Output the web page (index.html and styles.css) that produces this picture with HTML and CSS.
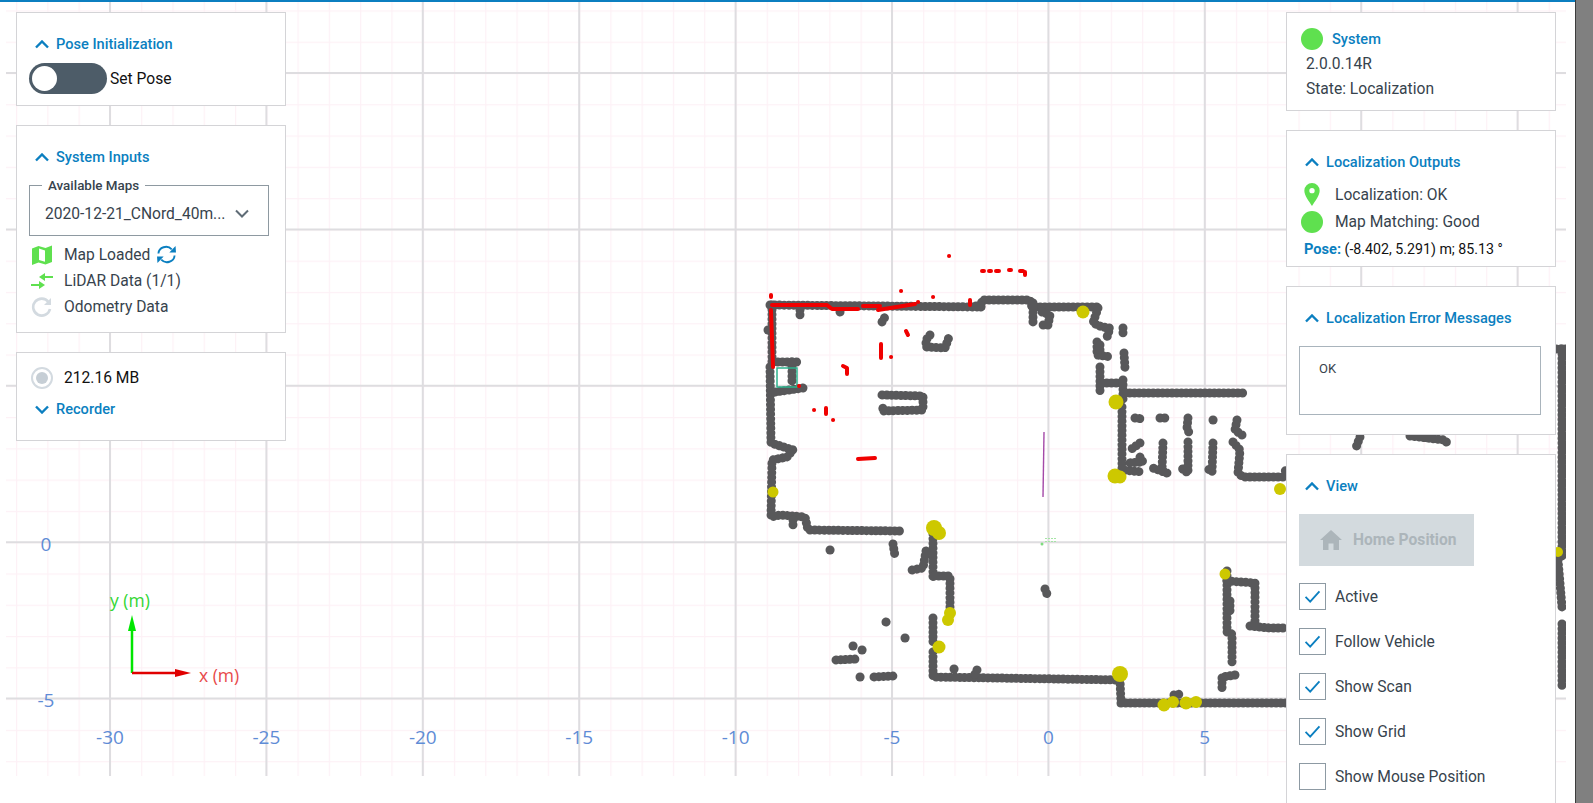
FILE: index.html
```html
<!DOCTYPE html>
<html lang="en">
	<head>
		<meta charset="UTF-8">
		<title>Localization</title>
		<link rel="stylesheet" href="styles.css">
	</head>
	<body>
		<div class="main_box">
			<!-- map canvas, page coordinates -->
			<svg class="map_canvas" viewBox="0 2 1575 801" width="1575" height="801">
				<defs>
					<pattern id="minor_grid" patternUnits="userSpaceOnUse" x="16" y="10.4" width="31.28" height="31.28">
						<path class="grid_minor" d="M0.5 0V31.28M0 0.5H31.28"/>
					</pattern>
					<clipPath id="canvas_clip"><rect x="6" y="2" width="1560" height="774"/></clipPath>
				</defs>
				<g clip-path="url(#canvas_clip)">
					<rect x="6" y="2" width="1560" height="774" fill="url(#minor_grid)"/>
					<path class="grid_major" d="M110 2V776M266.4 2V776M422.8 2V776M579.2 2V776M735.6 2V776M892 2V776M1048.4 2V776M1204.8 2V776M1361.2 2V776M1517.6 2V776"/>
					<path class="grid_major" d="M6 73H1566M6 229.4H1566M6 385.8H1566M6 542.2H1566M6 698.6H1566"/>

					<!-- scanned walls -->
					<g class="wall">
						<polyline points="770,305 980,307"/>
						<polyline points="981,307 982,300 1030,300 1032,307 1080,307 1098,307"/>
						<polyline points="976,306 984,306"/>
						<polyline points="1033,303 1033,325"/>
						<polyline points="1042,312 1050,315 1048,325 1042,325"/>
						<polyline points="1098,308 1093,323 1102,327 1110,328 1107,337"/>
						<polyline points="1123,328 1123,337"/>
						<polyline points="1097,342 1097,355 1112,357"/>
						<polyline points="1100,345 1100,352"/>
						<polyline points="1124,353 1125,368"/>
						<polyline points="1100,367 1100,392"/>
						<polyline points="1102,383 1123,383"/>
						<polyline points="1123,380 1123,400"/>
						<polyline points="1125,393 1243,393"/>
						<polyline points="1122,407 1122,470 1143,472"/>
						<polyline points="1135,418 1143,419"/>
						<polyline points="1160,418 1168,418"/>
						<polyline points="1188,418 1187,428 1190,435"/>
						<polyline points="1213,420 1213.5,420"/>
						<polyline points="1237,420 1235,430 1242,435"/>
						<polyline points="1140,443 1130,450"/>
						<polyline points="1163,443 1162,470 1167,473 1150,467"/>
						<polyline points="1188,442 1188,473 1180,467"/>
						<polyline points="1213,443 1212,472 1207,468"/>
						<polyline points="1233,442 1240,450 1238,473 1243,477 1286,477 1285,467"/>
						<polyline points="1140,457 1143,462 1128,463"/>
						<polyline points="772,305 772,365"/>
						<polyline points="768,330 768.5,330"/>
						<polyline points="770,367 771,443 793,450 787,457 772,460 771,517 780,515 805,517 808,530 900,531"/>
						<polyline points="793,520 793,525"/>
						<polyline points="773,362 798,362"/>
						<polyline points="792,362 792,383"/>
						<polyline points="775,392 803,388"/>
						<polyline points="882,322 885,317"/>
						<polyline points="800,310 800,318"/>
						<polyline points="840,312 842,316"/>
						<polyline points="930,335 926,340 926,347 945,348 949,337"/>
						<polyline points="882,395 923,396 923,410 882,411 884,405"/>
						<polyline points="933,534 933,579"/>
						<polyline points="934,576 950,576 950,608"/>
						<polyline points="926,551 923,568 912,570"/>
						<polyline points="893,544 895,556"/>
						<polyline points="830,550 830.5,550"/>
						<polyline points="1045,589 1047,594"/>
						<polyline points="933,618 933,645"/>
						<polyline points="933,652 933,677 1120,680 1121,703 1286,703"/>
						<polyline points="954,669 954.5,669"/>
						<polyline points="977,670 974,676"/>
						<polyline points="886,622 889,624"/>
						<polyline points="905,638 905.5,638"/>
						<polyline points="853,646 853.5,646"/>
						<polyline points="862,650 862.5,650"/>
						<polyline points="836,660 857,659"/>
						<polyline points="860,677 860.5,677"/>
						<polyline points="874,677 894,676"/>
						<polyline points="1174,695 1181,694"/>
						<polyline points="1227,571 1227,632 1232,634 1232,662 1235,660"/>
						<polyline points="1230,601 1230,615"/>
						<polyline points="1227,581 1255,583 1255,625 1250,626 1270,628 1286,628"/>
						<polyline points="1235,675 1222,677 1222,689"/>
						<polyline points="1360,437 1355,450"/>
						<polyline points="1410,436 1445,440 1447,443"/>
						<polyline points="1556,349 1566,349"/>
						<polyline points="1562,349 1562,560"/>
						<polyline points="1558,560 1562,607"/>
						<polyline points="1562,624 1562,688"/>
					</g>

					<rect class="teal_box" x="777" y="368" width="20" height="19"/>

					<!-- matched points -->
					<g class="yellow_dots">
						<circle cx="1083" cy="312" r="6.5"/>
						<circle cx="1116" cy="402" r="7.5"/>
						<circle cx="1115" cy="476" r="7.5"/>
						<circle cx="1120" cy="477" r="6.5"/>
						<circle cx="773" cy="492" r="5.5"/>
						<circle cx="934" cy="528" r="8"/>
						<circle cx="939" cy="533" r="7"/>
						<circle cx="950" cy="613" r="6"/>
						<circle cx="948" cy="620" r="6"/>
						<circle cx="939" cy="647" r="6.5"/>
						<circle cx="1120" cy="674" r="8"/>
						<circle cx="1164" cy="705" r="6.5"/>
						<circle cx="1173" cy="702" r="6"/>
						<circle cx="1186" cy="703" r="6.5"/>
						<circle cx="1196" cy="702" r="6"/>
						<circle cx="1225" cy="574" r="5.5"/>
						<circle cx="1280" cy="489" r="6"/>
						<circle cx="1558" cy="552" r="5"/>
					</g>

					<!-- laser scan -->
					<g class="red_scan">
						<polyline points="771,295 771,297"/>
						<polyline points="772,305 827,305 832,309 858,309"/>
						<polyline points="863,306 880,306"/>
						<polyline points="878,310 915,304"/>
						<polyline points="771,310 773,367"/>
						<polyline points="881,344 881,358"/>
						<polyline points="858,459 875,458"/>
						<polyline points="843,366 847,368 847,374"/>
						<polyline points="906,331 908,335"/>
						<polyline points="970,300 970,305"/>
						<polyline points="826,408 826,414"/>
						<path d="M949 256h.1M982 271h2M989 271h2M996 271h3M1009 270h2M1020 271h3M1025 272v3M901 291h.1M933 297h.1M918 302h.1M891 357h.1M799 386h.1M814 410h.1M833 420h.1"/>
					</g>

					<line class="purple_line" x1="1044" y1="432" x2="1043" y2="497"/>
					<circle class="vehicle_dot" cx="1042" cy="544" r="1.5"/>
					<path class="vehicle_mark" d="M1045 538.5h11M1045 541.5h11"/>

					<text class="axis_num" x="110" y="744">-30</text>
					<text class="axis_num" x="266.4" y="744">-25</text>
					<text class="axis_num" x="422.8" y="744">-20</text>
					<text class="axis_num" x="579.2" y="744">-15</text>
					<text class="axis_num" x="735.6" y="744">-10</text>
					<text class="axis_num" x="892" y="744">-5</text>
					<text class="axis_num" x="1048.4" y="744">0</text>
					<text class="axis_num" x="1204.8" y="744">5</text>
					<text class="axis_num" x="46" y="551">0</text>
					<text class="axis_num" x="46" y="707">-5</text>

					<!-- axis legend -->
					<line class="axis_y" x1="132" y1="673" x2="132" y2="625"/>
					<polygon class="axis_y_head" points="132,615 128,631 136,631"/>
					<line class="axis_x" x1="132" y1="673" x2="178" y2="673"/>
					<polygon class="axis_x_head" points="191,673 175,669 175,677"/>
					<text class="axis_y_text" x="110" y="607">y (m)</text>
					<text class="axis_x_text" x="199" y="682">x (m)</text>
				</g>
			</svg>

			<div class="side_col side_left">
				<div class="panel pose_panel">
					<div class="panel_title">
						<svg class="chevron" viewBox="0 0 14 9"><polyline points="1,7.5 7,1.5 13,7.5"/></svg>
						<span>Pose Initialization</span>
					</div>
					<div class="pose_row">
						<span class="toggle"><span class="toggle_knob"></span></span>
						<span class="black_text">Set Pose</span>
					</div>
				</div>

				<div class="panel inputs_panel">
					<div class="panel_title">
						<svg class="chevron" viewBox="0 0 14 9"><polyline points="1,7.5 7,1.5 13,7.5"/></svg>
						<span>System Inputs</span>
					</div>
					<fieldset class="map_select">
						<legend>Available Maps</legend>
						<span class="map_name">2020-12-21_CNord_40m...</span>
						<svg class="select_arrow" viewBox="0 0 14 9"><polyline points="1,1.5 7,7.5 13,1.5"/></svg>
					</fieldset>
					<div class="status_row">
						<svg class="status_icon" viewBox="0 0 22 20">
							<path class="green_fill" d="M1 3.5L7.5 1L14.5 3L21 .5V17L14.5 19.5L7.5 17.5L1 20Z"/>
							<path class="white_fill" d="M8 3.6L14 5.4V16.8L8 15Z"/>
						</svg>
						<span>Map Loaded</span>
						<svg class="sync_icon" viewBox="0 0 22 20">
							<path d="M2.5 9A8 7.5 0 0 1 16.5 4.5"/>
							<polygon points="14,8 21,8 20.5,1"/>
							<path d="M19.5 11A8 7.5 0 0 1 5.5 15.5"/>
							<polygon points="8,12 1,12 1.5,19"/>
						</svg>
					</div>
					<div class="status_row">
						<svg class="status_icon" viewBox="0 0 22 20">
							<path class="green_line" d="M0 14H9M22 6H14"/>
							<polygon class="green_fill" points="8,10 8,18 14,14"/>
							<polygon class="green_fill" points="14,2 14,10 8,6"/>
						</svg>
						<span>LiDAR Data (1/1)</span>
					</div>
					<div class="status_row">
						<svg class="status_icon" viewBox="0 0 22 20">
							<path class="gray_line" d="M17.5 5A8.5 8.5 0 1 0 19 12"/>
							<polygon class="gray_fill" points="13,8 20,8 20,1"/>
						</svg>
						<span>Odometry Data</span>
					</div>
				</div>

				<div class="panel recorder_panel">
					<div class="recorder_row">
						<span class="record_icon"><span class="record_inner"></span></span>
						<span class="black_text">212.16 MB</span>
					</div>
					<div class="panel_title">
						<svg class="chevron" viewBox="0 0 14 9"><polyline points="1,1.5 7,7.5 13,1.5"/></svg>
						<span>Recorder</span>
					</div>
				</div>
			</div>

			<div class="side_col side_right">
				<div class="panel system_panel">
					<div class="system_title">
						<span class="green_dot"></span>
						<span class="title_text">System</span>
					</div>
					<div class="system_line">2.0.0.14R</div>
					<div class="system_line">State: Localization</div>
				</div>

				<div class="panel outputs_panel">
					<div class="panel_title">
						<svg class="chevron" viewBox="0 0 14 9"><polyline points="1,7.5 7,1.5 13,7.5"/></svg>
						<span>Localization Outputs</span>
					</div>
					<div class="output_row">
						<span class="output_icon">
							<svg class="pin_icon" viewBox="0 0 16 24">
								<path class="green_fill" fill-rule="evenodd" d="M8 0A8 8 0 0 0 0 8C0 13 5 19 8 24C11 19 16 13 16 8A8 8 0 0 0 8 0ZM8 5.2A2.8 2.8 0 1 1 8 10.8A2.8 2.8 0 1 1 8 5.2Z"/>
							</svg>
						</span>
						<span>Localization: OK</span>
					</div>
					<div class="output_row">
						<span class="output_icon"><span class="green_dot"></span></span>
						<span>Map Matching: Good</span>
					</div>
					<div class="pose_line"><b>Pose:</b> (-8.402, 5.291) m; 85.13 °</div>
				</div>

				<div class="panel errors_panel">
					<div class="panel_title">
						<svg class="chevron" viewBox="0 0 14 9"><polyline points="1,7.5 7,1.5 13,7.5"/></svg>
						<span>Localization Error Messages</span>
					</div>
					<div class="error_box">OK</div>
				</div>

				<div class="panel view_panel">
					<div class="panel_title">
						<svg class="chevron" viewBox="0 0 14 9"><polyline points="1,7.5 7,1.5 13,7.5"/></svg>
						<span>View</span>
					</div>
					<div class="home_btn">
						<svg class="home_icon" viewBox="0 0 22 20"><path d="M11 0L22 10H19V20H13.5V13.5H8.5V20H3V10H0Z"/></svg>
						<span>Home Position</span>
					</div>
					<ul class="check_list">
						<li><span class="check_box"><svg viewBox="0 0 27 27"><polyline points="6,14 11,19 21,8"/></svg></span>Active</li>
						<li><span class="check_box"><svg viewBox="0 0 27 27"><polyline points="6,14 11,19 21,8"/></svg></span>Follow Vehicle</li>
						<li><span class="check_box"><svg viewBox="0 0 27 27"><polyline points="6,14 11,19 21,8"/></svg></span>Show Scan</li>
						<li><span class="check_box"><svg viewBox="0 0 27 27"><polyline points="6,14 11,19 21,8"/></svg></span>Show Grid</li>
						<li><span class="check_box"></span>Show Mouse Position</li>
					</ul>
				</div>
			</div>
		</div>
		<div class="scroll_strip"></div>
	</body>
</html>
```

FILE: styles.css
```css
* {
	margin: 0;
	padding: 0;
	box-sizing: border-box;
}

html, body {
	height: 100%;
	overflow: hidden;
}

body {
	display: flex;
	background-color: #fff;
	color: #37434d;
	font-family: Roboto, "Liberation Sans", sans-serif;
	font-size: 15.6px;
}

.main_box {
	position: relative;
	flex: 1;
	overflow: hidden;
	border-top: 2px solid #0b7fc0;
}

.scroll_strip {
	width: 18px;
	background-color: #808080;
	border-left: 1px solid #3c3c3c;
}

/* map */
.map_canvas {
	display: block;
}

.grid_minor {
	fill: none;
	stroke: #fdf1f6;
	stroke-width: 1.4;
}

.grid_major {
	fill: none;
	stroke: #dedde0;
	stroke-width: 2;
}

.wall polyline {
	fill: none;
	stroke: #58585a;
	stroke-width: 9;
	stroke-linecap: round;
	stroke-linejoin: round;
	stroke-dasharray: .1 4.6;
}

.teal_box {
	fill: none;
	stroke: #2db38d;
	stroke-width: 1.5;
}

.yellow_dots circle {
	fill: #cdc800;
}

.red_scan polyline, .red_scan path {
	fill: none;
	stroke: #f00000;
	stroke-width: 4;
	stroke-linecap: round;
	stroke-linejoin: round;
}

.purple_line {
	stroke: #a44aa8;
	stroke-width: 1.4;
}

.vehicle_dot {
	fill: #7fdc7f;
}

.vehicle_mark {
	fill: none;
	stroke: #a5e5a5;
	stroke-width: 1;
	stroke-dasharray: 2 1;
}

.axis_num {
	fill: #5f8cd6;
	font-family: "Open Sans", sans-serif;
	font-size: 19px;
	text-anchor: middle;
}

.axis_y {
	stroke: #00e600;
	stroke-width: 2.5;
}

.axis_y_head {
	fill: #00e600;
}

.axis_x {
	stroke: #e00000;
	stroke-width: 2.5;
}

.axis_x_head {
	fill: #e00000;
}

.axis_y_text, .axis_x_text {
	font-family: "Open Sans", sans-serif;
	font-size: 17.5px;
}

.axis_y_text {
	fill: #33d633;
}

.axis_x_text {
	fill: #e84a4a;
}

/* panels */
.side_col {
	position: absolute;
	top: 10px;
	display: flex;
	flex-direction: column;
	gap: 19px;
	width: 270px;
}

.side_left {
	left: 16px;
}

.side_right {
	left: 1286px;
}

.panel {
	background-color: #fff;
	border: 1px solid #d4d4d7;
}

.panel_title, .title_text {
	color: #0b7fc0;
	font-size: 14.6px;
	font-weight: 500;
}

.panel_title {
	display: flex;
	align-items: center;
	gap: 7px;
	height: 20px;
	margin-left: 6px;
}

.chevron {
	width: 14px;
	height: 9px;
	fill: none;
	stroke: #0b7fc0;
	stroke-width: 2.4;
}

.black_text {
	color: #111;
}

.pose_panel {
	height: 94px;
	padding: 21px 12px 0;
}

.pose_row {
	display: flex;
	align-items: center;
	gap: 3px;
	margin-top: 9px;
}

.toggle {
	display: flex;
	align-items: center;
	width: 78px;
	height: 31px;
	padding-left: 3px;
	background-color: #4d5c68;
	border-radius: 16px;
}

.toggle_knob {
	width: 25px;
	height: 25px;
	background-color: #fff;
	border-radius: 50%;
}

.inputs_panel {
	height: 208px;
	padding: 21px 12px 0;
}

.map_select {
	position: relative;
	display: flex;
	align-items: center;
	width: 240px;
	height: 57.5px;
	margin-top: 11px;
	padding: 0 19px 0 15px;
	border: 1px solid #8e99a1;
}

.map_select legend {
	margin-left: -3px;
	padding: 0 6px;
	font-size: 13.4px;
	font-weight: 500;
}

.map_name {
	flex: 1;
	white-space: nowrap;
	font-size: 15.6px;
}

.select_arrow {
	width: 14px;
	height: 9px;
	fill: none;
	stroke: #5f6c76;
	stroke-width: 2;
}

.status_row {
	display: flex;
	align-items: center;
	height: 26px;
	gap: 11px;
}

.status_row:nth-of-type(2) {
	margin-top: 6px;
}

.status_icon {
	flex: none;
	width: 22px;
	height: 20px;
	margin-left: 2px;
}

.green_fill {
	fill: #5fe04f;
}

.white_fill {
	fill: #fff;
}

.green_line {
	fill: none;
	stroke: #5fe04f;
	stroke-width: 2;
}

.gray_line {
	fill: none;
	stroke: #d3dae0;
	stroke-width: 2.6;
}

.gray_fill {
	fill: #d3dae0;
}

.sync_icon {
	width: 21px;
	height: 19px;
	margin-left: -5px;
}

.sync_icon path {
	fill: none;
	stroke: #0b7fc0;
	stroke-width: 2;
}

.sync_icon polygon {
	fill: #0b7fc0;
}

.recorder_panel {
	height: 89px;
	padding: 14px 12px 0;
}

.recorder_row {
	display: flex;
	align-items: center;
	gap: 11px;
	margin-left: 2px;
	margin-bottom: 10px;
}

.record_icon {
	display: flex;
	align-items: center;
	justify-content: center;
	width: 22px;
	height: 22px;
	border: 2px solid #d3dae0;
	border-radius: 50%;
}

.record_inner {
	width: 12px;
	height: 12px;
	background-color: #c6ced5;
	border-radius: 50%;
}

.green_dot {
	display: block;
	width: 22px;
	height: 22px;
	background-color: #5fe04f;
	border-radius: 50%;
}

.system_panel {
	height: 99px;
	padding: 15px 14px 0;
}

.system_title {
	display: flex;
	align-items: center;
	gap: 9px;
	margin-bottom: 2px;
}

.system_line {
	height: 25px;
	margin-left: 5px;
	line-height: 25px;
}

.outputs_panel {
	height: 137px;
	padding: 21px 12px 0;
}

.outputs_panel .output_row:nth-of-type(2) {
	margin-top: 9px;
}

.output_row {
	display: flex;
	align-items: center;
	height: 27px;
	gap: 12px;
}

.output_icon {
	display: flex;
	justify-content: center;
	width: 22px;
	margin-left: 2px;
}

.pin_icon {
	width: 16px;
	height: 23px;
}

.pose_line {
	margin-top: 5px;
	margin-left: 5px;
	color: #111;
	font-size: 14.2px;
}

.pose_line b {
	color: #0b7fc0;
	font-size: 14.6px;
	font-weight: 700;
}

.errors_panel {
	height: 149px;
	padding: 21px 12px 0;
}

.error_box {
	width: 242px;
	height: 69px;
	margin-top: 18px;
	padding: 14px 19px;
	border: 1px solid #a9b4bc;
	font-size: 13px;
}

.view_panel {
	padding: 21px 12px 0;
	height: 360px;
}

.home_btn {
	display: flex;
	align-items: center;
	gap: 11px;
	width: 175px;
	height: 52px;
	margin-top: 18px;
	padding-left: 21px;
	background-color: #d3dade;
	color: #acb5ba;
	font-size: 15.6px;
	font-weight: 700;
}

.home_icon {
	width: 22px;
	height: 20px;
	fill: #acb5ba;
}

.check_list {
	list-style: none;
	margin-top: 17px;
}

.check_list li {
	display: flex;
	align-items: center;
	gap: 9px;
	height: 27px;
	margin-bottom: 18px;
}

.check_box {
	width: 27px;
	height: 27px;
	border: 1px solid #8d9aa3;
}

.check_box svg {
	display: block;
	width: 25px;
	height: 25px;
	fill: none;
	stroke: #0b7fc0;
	stroke-width: 2;
}
```
